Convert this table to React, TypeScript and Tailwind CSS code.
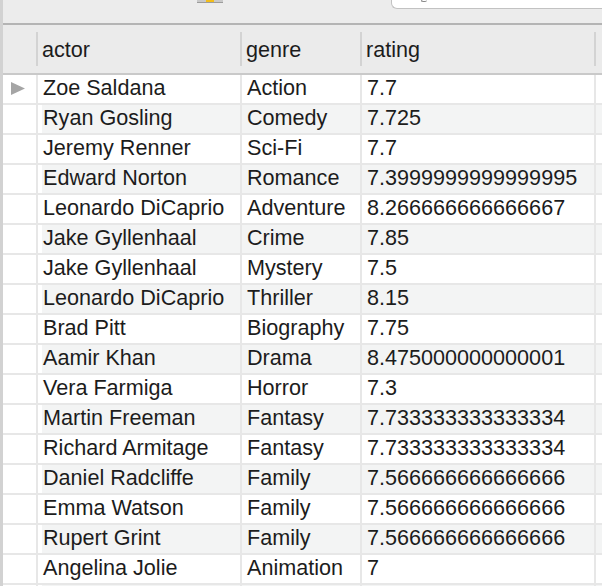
import React from "react";

type Row = { actor: string; genre: string; rating: string };

const rows: Row[] = [
  { actor: "Zoe Saldana", genre: "Action", rating: "7.7" },
  { actor: "Ryan Gosling", genre: "Comedy", rating: "7.725" },
  { actor: "Jeremy Renner", genre: "Sci-Fi", rating: "7.7" },
  { actor: "Edward Norton", genre: "Romance", rating: "7.3999999999999995" },
  { actor: "Leonardo DiCaprio", genre: "Adventure", rating: "8.266666666666667" },
  { actor: "Jake Gyllenhaal", genre: "Crime", rating: "7.85" },
  { actor: "Jake Gyllenhaal", genre: "Mystery", rating: "7.5" },
  { actor: "Leonardo DiCaprio", genre: "Thriller", rating: "8.15" },
  { actor: "Brad Pitt", genre: "Biography", rating: "7.75" },
  { actor: "Aamir Khan", genre: "Drama", rating: "8.475000000000001" },
  { actor: "Vera Farmiga", genre: "Horror", rating: "7.3" },
  { actor: "Martin Freeman", genre: "Fantasy", rating: "7.733333333333334" },
  { actor: "Richard Armitage", genre: "Fantasy", rating: "7.733333333333334" },
  { actor: "Daniel Radcliffe", genre: "Family", rating: "7.566666666666666" },
  { actor: "Emma Watson", genre: "Family", rating: "7.566666666666666" },
  { actor: "Rupert Grint", genre: "Family", rating: "7.566666666666666" },
  { actor: "Angelina Jolie", genre: "Animation", rating: "7" },
  { actor: "", genre: "", rating: "" },
];

const HeaderSep = () => <div className="w-[2px] h-[34px] self-center bg-[#d3d3d3]" />;

const DataRow = ({ row, index }: { row: Row; index: number }) => {
  const bg = index % 2 === 1 ? "bg-[#f3f4f4]" : "bg-white";
  return (
    <div className="flex h-[30px] shrink-0 border-b-2 border-[#e7e7e7]">
      <div className="w-[35px] shrink-0 bg-white border-r-2 border-[#e7e7e7] flex items-center justify-center">
        {index === 0 && (
          <svg width="14" height="13" viewBox="0 0 14 13" className="mr-[4px] -mt-[1px]">
            <path d="M0 0 L14 6.5 L0 13 Z" fill="#a5a5a5" />
          </svg>
        )}
      </div>
      <div className={`w-[204px] shrink-0 ${bg} border-l-4 border-l-white border-r-2 border-r-[#e7e7e7] flex items-center pl-[1px] pb-[2px] whitespace-nowrap overflow-hidden`}>
        {row.actor}
      </div>
      <div className={`w-[120px] shrink-0 ${bg} border-r-2 border-[#e7e7e7] flex items-center pl-[5px] pb-[2px] whitespace-nowrap overflow-hidden`}>
        {row.genre}
      </div>
      <div className={`w-[234px] shrink-0 ${bg} border-r-2 border-[#e7e7e7] flex items-center pl-[5px] pb-[2px] whitespace-nowrap overflow-hidden`}>
        {row.rating}
      </div>
      <div className={`flex-1 ${bg}`} />
    </div>
  );
};

export default function App() {
  return (
    <div className="flex w-[602px] h-[586px] overflow-hidden bg-white font-['Liberation_Sans',Arial,sans-serif] text-[21.6px] text-[#1c1c1c]">
      <div className="w-[3px] shrink-0 bg-[#d2d2d2]" />
      <div className="flex-1 flex flex-col min-w-0">
        {/* toolbar */}
        <div className="h-[25px] shrink-0 flex bg-[#ececec] border-b-2 border-[#b4b4b4]">
          <div className="ml-[194px] w-[26px] h-[3px] flex justify-center bg-[#c9c9c9] border-b border-[#9c9c9c]">
            <div className="w-[8px] h-full bg-[#f2bd1a]" />
          </div>
          <div className="ml-[168px] flex-1 h-[9px] bg-white border-l border-b border-[#c2c2c2] rounded-bl-[6px] flex">
            <div className="ml-[29px] w-[6px] h-[2px] rounded-b-full border-b border-l border-[#8a8a8a]" />
          </div>
        </div>
        {/* header */}
        <div className="h-[50px] shrink-0 flex bg-[#ebebeb] border-b-2 border-[#c9c9c9]">
          <div className="w-[33px] shrink-0" />
          <HeaderSep />
          <div className="w-[202px] shrink-0 flex items-center pl-[4px] pt-[2px]">actor</div>
          <HeaderSep />
          <div className="w-[118px] shrink-0 flex items-center pl-[4px] pt-[2px]">genre</div>
          <HeaderSep />
          <div className="w-[232px] shrink-0 flex items-center pl-[4px] pt-[2px]">rating</div>
          <HeaderSep />
          <div className="flex-1" />
        </div>
        {/* body */}
        <div className="flex flex-col">
          {rows.map((row, i) => (
            <DataRow key={i} row={row} index={i} />
          ))}
        </div>
      </div>
    </div>
  );
}
